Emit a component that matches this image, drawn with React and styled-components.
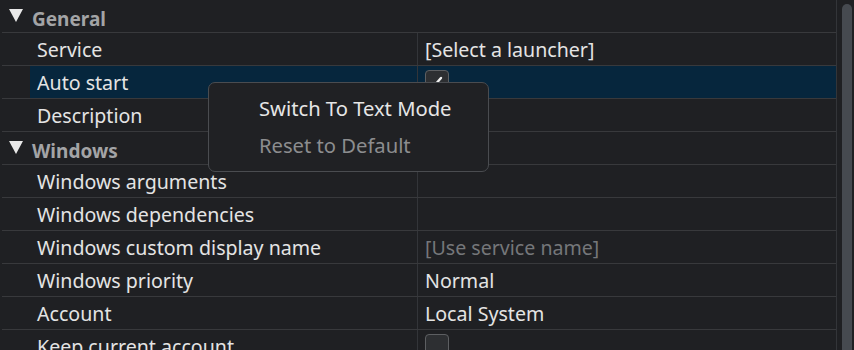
import styled, { createGlobalStyle } from "styled-components";

const GlobalStyle = createGlobalStyle`
  html, body {
    margin: 0;
    padding: 0;
    background: #1f2023;
    overflow: hidden;
  }
`;

const Page = styled.div`
  display: flex;
  width: 854px;
  height: 350px;
  background: #1f2023;
  font-family: "Noto Sans", "Open Sans", sans-serif;
  font-size: 19.6px;
  color: #e4e4e4;
  position: relative;
  overflow: hidden;
`;

const Grid = styled.div`
  width: 837px;
  flex-shrink: 0;
  border-right: 1px solid #333539;
  box-sizing: border-box;
  display: flex;
  flex-direction: column;
`;

const Header = styled.div`
  height: 33px;
  flex-shrink: 0;
  box-sizing: border-box;
  border-bottom: 1px solid #38393c;
  margin-left: 2px;
  display: flex;
  align-items: center;
  gap: 9px;
  padding-left: 7px;
  font-size: 19px;
  font-weight: 700;
  color: #a3a4a6;
`;

const HeaderText = styled.span`
  margin-top: 6px;
`;

const Arrow = styled.span`
  width: 0;
  height: 0;
  border-left: 7px solid transparent;
  border-right: 7px solid transparent;
  border-top: 13px solid #e8e8e8;
  margin-top: -2px;
`;

const Row = styled.div`
  height: 33px;
  flex-shrink: 0;
  box-sizing: border-box;
  border-bottom: 1px solid #38393c;
  margin-left: 2px;
  display: grid;
  grid-template-columns: 28px 388px 1fr;
`;

const Indent = styled.div``;

const Label = styled.div`
  display: flex;
  align-items: center;
  padding-left: 7px;
  border-right: 1px solid #333539;
  background: ${(p) => (p.$selected ? "#06263d" : "transparent")};
  white-space: nowrap;
`;

const Value = styled.div`
  display: flex;
  align-items: center;
  padding-left: 7px;
  background: ${(p) => (p.$selected ? "#06263d" : "transparent")};
  color: ${(p) => (p.$muted ? "#75777a" : "#e4e4e4")};
  white-space: nowrap;
`;

const Check = styled.span`
  width: 22px;
  height: 22px;
  flex-shrink: 0;
  border: 1px solid #5d5f62;
  border-radius: 4px;
  background: #2d2f32;
  display: flex;
  align-items: center;
  justify-content: center;
  align-self: flex-start;
  margin-top: 4px;
`;

const ScrollTrack = styled.div`
  width: 17px;
  display: flex;
  justify-content: center;
  padding-top: 4px;
  box-sizing: border-box;
`;

const Thumb = styled.div`
  width: 10px;
  height: 400px;
  margin-left: 2px;
  border-radius: 5px;
  background: #464a50;
`;

const Menu = styled.div`
  position: absolute;
  left: 208px;
  top: 82px;
  width: 281px;
  height: 90px;
  box-sizing: border-box;
  background: #202124;
  border: 1.5px solid #4a4c50;
  border-radius: 7px;
  padding-top: 6px;
  font-size: 20.2px;
`;

const MenuItem = styled.div`
  height: 37px;
  display: flex;
  align-items: center;
  padding-left: 50px;
  color: ${(p) => (p.$disabled ? "#8c8d8f" : "#e6e6e6")};
`;

const rows = [
  { type: "header", text: "General" },
  { label: "Service", value: "[Select a launcher]" },
  { label: "Auto start", check: true, checked: true, selected: true },
  { label: "Description", value: "" },
  { type: "header", text: "Windows" },
  { label: "Windows arguments", value: "" },
  { label: "Windows dependencies", value: "" },
  { label: "Windows custom display name", value: "[Use service name]", muted: true },
  { label: "Windows priority", value: "Normal" },
  { label: "Account", value: "Local System" },
  { label: "Keep current account", check: true, checked: false },
];

const CheckMark = () => (
  <svg width="14" height="14" viewBox="0 0 14 14">
    <path d="M4 11 L11 3" stroke="#f0f0f0" strokeWidth="2.4" strokeLinecap="round" />
  </svg>
);

const App = () => {
  return (
    <>
      <GlobalStyle />
      <Page>
        <Grid>
          {rows.map((r, i) =>
            r.type === "header" ? (
              <Header key={i}>
                <Arrow />
                <HeaderText>{r.text}</HeaderText>
              </Header>
            ) : (
              <Row key={i}>
                <Indent />
                <Label $selected={r.selected}>{r.label}</Label>
                <Value $selected={r.selected} $muted={r.muted}>
                  {r.check ? <Check>{r.checked && <CheckMark />}</Check> : r.value}
                </Value>
              </Row>
            )
          )}
        </Grid>
        <ScrollTrack>
          <Thumb />
        </ScrollTrack>
        <Menu>
          <MenuItem>Switch To Text Mode</MenuItem>
          <MenuItem $disabled>Reset to Default</MenuItem>
        </Menu>
      </Page>
    </>
  );
};

export default App;
